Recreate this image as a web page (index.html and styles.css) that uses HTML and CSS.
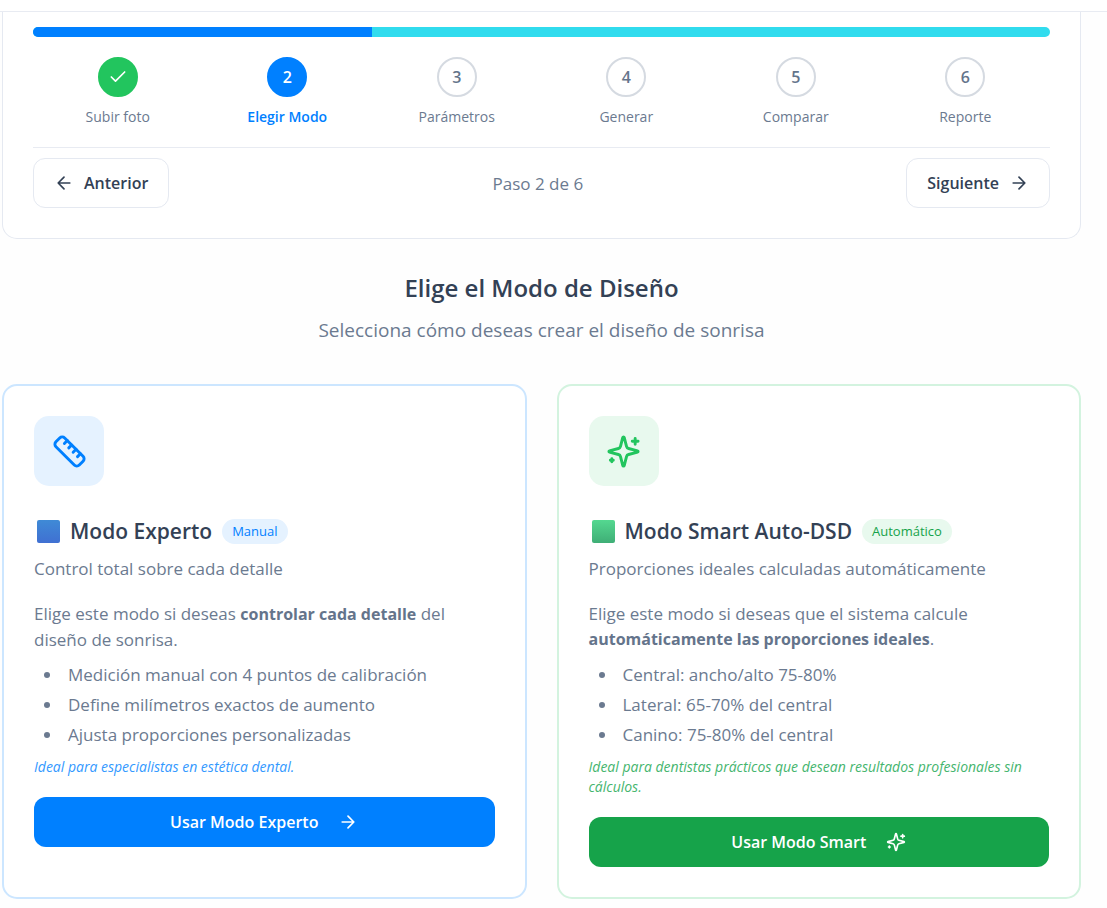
FILE: index.html
```html
<!DOCTYPE html>
<html lang="es">
<head>
  <meta charset="UTF-8">
  <meta name="viewport" content="width=device-width, initial-scale=1.0">
  <title>Elige el Modo de Diseño</title>
  <link rel="stylesheet" href="styles.css">
</head>
<body>

  <!-- iconos compartidos -->
  <svg class="sprite" aria-hidden="true">
    <symbol id="i-check" viewBox="0 0 24 24"><path d="M20 6 9 17l-5-5"/></symbol>
    <symbol id="i-left" viewBox="0 0 24 24"><path d="m12 19-7-7 7-7M19 12H5"/></symbol>
    <symbol id="i-right" viewBox="0 0 24 24"><path d="M5 12h14M12 5l7 7-7 7"/></symbol>
    <symbol id="i-ruler" viewBox="0 0 24 24">
      <path d="M21.3 15.3a2.4 2.4 0 0 1 0 3.4l-2.6 2.6a2.4 2.4 0 0 1-3.4 0L2.7 8.7a2.41 2.41 0 0 1 0-3.4l2.6-2.6a2.41 2.41 0 0 1 3.4 0Z"/>
      <path d="m14.5 12.5 2-2M11.5 9.5l2-2M8.5 6.5l2-2M17.5 15.5l2-2"/>
    </symbol>
    <symbol id="i-sparkles" viewBox="0 0 24 24">
      <path d="M9.937 15.5A2 2 0 0 0 8.5 14.063l-6.135-1.582a.5.5 0 0 1 0-.962L8.5 9.936A2 2 0 0 0 9.937 8.5l1.582-6.135a.5.5 0 0 1 .963 0L14.063 8.5A2 2 0 0 0 15.5 9.937l6.135 1.581a.5.5 0 0 1 0 .964L15.5 14.063a2 2 0 0 0-1.437 1.437l-1.582 6.135a.5.5 0 0 1-.963 0z"/>
      <path d="M20 3v4M22 5h-4M4 17v2M5 18H3"/>
    </symbol>
  </svg>

  <header class="topbar"></header>

  <main class="page">
    <section class="wizard">
      <div class="progress">
        <div class="progress-fill" style="width: 33.33%"></div>
      </div>

      <ol class="steps">
        <li class="step done">
          <span class="circle"><svg class="icon"><use href="#i-check"/></svg></span>
          <span class="label">Subir foto</span>
        </li>
        <li class="step active">
          <span class="circle">2</span>
          <span class="label">Elegir Modo</span>
        </li>
        <li class="step">
          <span class="circle">3</span>
          <span class="label">Parámetros</span>
        </li>
        <li class="step">
          <span class="circle">4</span>
          <span class="label">Generar</span>
        </li>
        <li class="step">
          <span class="circle">5</span>
          <span class="label">Comparar</span>
        </li>
        <li class="step">
          <span class="circle">6</span>
          <span class="label">Reporte</span>
        </li>
      </ol>

      <div class="wizard-nav">
        <button type="button" class="nav-button"><svg class="icon"><use href="#i-left"/></svg>Anterior</button>
        <span class="counter">Paso 2 de 6</span>
        <button type="button" class="nav-button">Siguiente<svg class="icon"><use href="#i-right"/></svg></button>
      </div>
    </section>

    <div class="intro">
      <h1>Elige el Modo de Diseño</h1>
      <p>Selecciona cómo deseas crear el diseño de sonrisa</p>
    </div>

    <div class="modes">
      <article class="mode expert">
        <div class="tile"><svg class="icon-lg"><use href="#i-ruler"/></svg></div>
        <div class="mode-title">
          <span class="square"></span>
          <h2>Modo Experto</h2>
          <span class="badge">Manual</span>
        </div>
        <p class="subtitle">Control total sobre cada detalle</p>
        <p class="text">Elige este modo si deseas <strong>controlar cada detalle</strong> del diseño de sonrisa.</p>
        <ul class="features">
          <li>Medición manual con 4 puntos de calibración</li>
          <li>Define milímetros exactos de aumento</li>
          <li>Ajusta proporciones personalizadas</li>
        </ul>
        <p class="note">Ideal para especialistas en estética dental.</p>
        <button type="button" class="use-button">Usar Modo Experto<svg class="icon"><use href="#i-right"/></svg></button>
      </article>

      <article class="mode smart">
        <div class="tile"><svg class="icon-lg"><use href="#i-sparkles"/></svg></div>
        <div class="mode-title">
          <span class="square"></span>
          <h2>Modo Smart Auto-DSD</h2>
          <span class="badge">Automático</span>
        </div>
        <p class="subtitle">Proporciones ideales calculadas automáticamente</p>
        <p class="text">Elige este modo si deseas que el sistema calcule <strong>automáticamente las proporciones ideales</strong>.</p>
        <ul class="features">
          <li>Central: ancho/alto 75-80%</li>
          <li>Lateral: 65-70% del central</li>
          <li>Canino: 75-80% del central</li>
        </ul>
        <p class="note">Ideal para dentistas prácticos que desean resultados profesionales sin cálculos.</p>
        <button type="button" class="use-button">Usar Modo Smart<svg class="icon"><use href="#i-sparkles"/></svg></button>
      </article>
    </div>
  </main>

</body>
</html>
```
FILE: styles.css
```css
* {
  box-sizing: border-box;
  margin: 0;
  padding: 0;
}

body {
  background-color: #fefefe;
  color: #6b7a90;
  font-family: "Segoe UI", "Open Sans", "Noto Sans", sans-serif;
  font-size: 17px;
  line-height: 25px;
}

button {
  font: inherit;
  font-size: 16px;
  font-weight: 600;
  cursor: pointer;
}

strong {
  color: #64748b;
  font-size: 16px;
}

.sprite {
  display: none;
}

.icon,
.icon-lg {
  width: 20px;
  height: 20px;
  flex-shrink: 0;
  fill: none;
  stroke: currentColor;
  stroke-width: 2;
  stroke-linecap: round;
  stroke-linejoin: round;
}

.icon-lg {
  width: 35px;
  height: 35px;
}

.topbar {
  height: 12px;
  background-color: #fff;
  border-bottom: 1px solid #e8ebf2;
}

.page {
  padding: 0 26px 10px 2px;
}

/* Asistente */
.wizard {
  padding: 15px 30px 30px;
  background-color: #fff;
  border: 1px solid #e5e9f1;
  border-top: none;
  border-radius: 0 0 15px 15px;
}

.progress {
  height: 10px;
  background-color: #31dcee;
  border-radius: 5px;
  overflow: hidden;
}

.progress-fill {
  height: 100%;
  background-color: #0080ff;
}

.steps {
  display: grid;
  grid-template-columns: repeat(6, 1fr);
  margin-top: 20px;
  padding-bottom: 20px;
  border-bottom: 1px solid #e8ebf2;
  list-style: none;
}

.step {
  display: flex;
  flex-direction: column;
  align-items: center;
  gap: 10px;
}

.circle {
  display: flex;
  align-items: center;
  justify-content: center;
  width: 40px;
  height: 40px;
  background-color: #fff;
  border: 2px solid #d5dae1;
  border-radius: 50%;
  color: #64748b;
  font-size: 16px;
  font-weight: 600;
}

.label {
  font-size: 14px;
  line-height: 20px;
}

.done .circle {
  background-color: #22c55e;
  border-color: #22c55e;
  color: #fff;
}

.active .circle {
  background-color: #0080ff;
  border-color: #0080ff;
  color: #fff;
}

.active .label {
  color: #0080ff;
  font-weight: 600;
}

.wizard-nav {
  display: flex;
  align-items: center;
  justify-content: space-between;
  margin-top: 10px;
}

.nav-button {
  display: flex;
  align-items: center;
  gap: 10px;
  height: 50px;
  padding: 0 20px;
  background-color: #fff;
  border: 1px solid #e5e9f1;
  border-radius: 12px;
  color: #334155;
}

/* Encabezado */
.intro {
  padding: 30px 0 40px;
  text-align: center;
}

.intro h1 {
  color: #334155;
  font-size: 24px;
  font-weight: 600;
  line-height: 37px;
}

.intro p {
  margin-top: 10px;
  font-size: 19px;
  line-height: 28px;
}

/* Tarjetas de modo */
.modes {
  display: grid;
  grid-template-columns: 1fr 1fr;
  gap: 30px;
}

.mode {
  padding: 30px;
  background-color: #fff;
  border: 2px solid #cce6ff;
  border-radius: 15px;
}

.tile {
  display: flex;
  align-items: center;
  justify-content: center;
  width: 70px;
  height: 70px;
  background-color: #e5f2ff;
  border-radius: 15px;
  color: #0080ff;
}

.mode-title {
  display: flex;
  align-items: center;
  gap: 10px;
  height: 30px;
  margin-top: 30px;
}

.square {
  width: 23px;
  height: 23px;
  margin-left: 3px;
  background: linear-gradient(#3f8ad6, #4070d2);
  border-radius: 2px;
}

.mode h2 {
  color: #334155;
  font-size: 21px;
  font-weight: 600;
  line-height: 30px;
}

.badge {
  padding: 0 10px;
  background-color: #e5f2ff;
  border-radius: 13px;
  color: #0080ff;
  font-size: 13px;
}

.subtitle {
  margin-top: 10px;
}

.text {
  margin-top: 20px;
}

.features {
  display: grid;
  gap: 5px;
  margin-top: 10px;
  padding-left: 29px;
}

.features li {
  padding-left: 5px;
}

.note {
  margin-top: 10px;
  color: #3399ff;
  font-size: 14px;
  font-style: italic;
  line-height: 20px;
}

.use-button {
  display: flex;
  align-items: center;
  justify-content: center;
  gap: 20px;
  width: 100%;
  height: 50px;
  margin-top: 20px;
  background-color: #0080ff;
  border: none;
  border-radius: 12px;
  color: #fff;
}

.smart {
  border-color: #d3f3df;
}

.smart .tile {
  background-color: #e8f9ee;
  color: #22c55e;
}

.smart .square {
  background: linear-gradient(#54d890, #3fae76);
}

.smart .badge {
  background-color: #e8f9ee;
  color: #16a34a;
}

.smart .note {
  color: #45b56e;
}

.smart .use-button {
  background-color: #16a34a;
}

@media screen and (max-width: 768px) {
  .modes {
    grid-template-columns: 1fr;
  }

  .label {
    font-size: 12px;
  }
}
```
